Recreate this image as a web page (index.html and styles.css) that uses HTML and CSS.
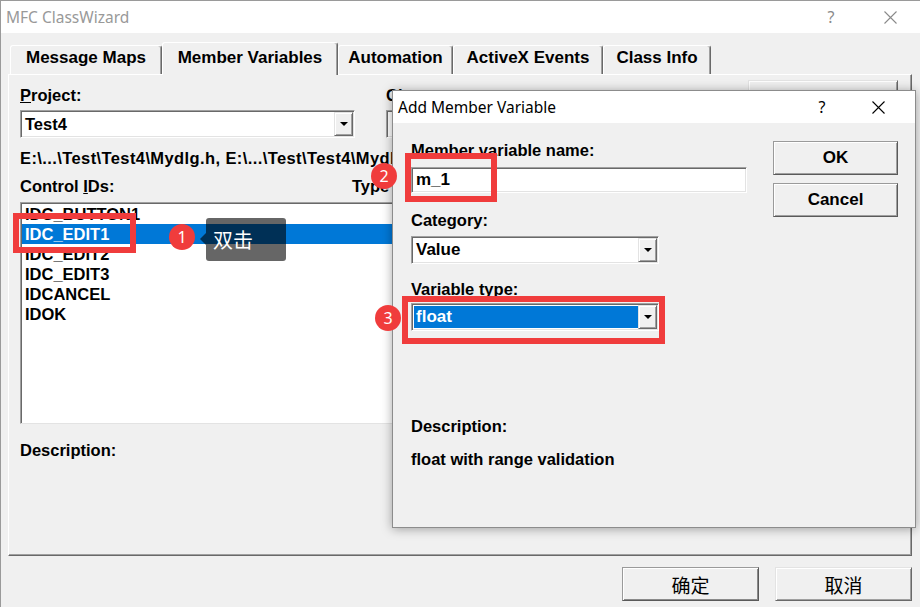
FILE: index.html
```html
<!DOCTYPE html>
<html>
<head>
<meta charset="utf-8">
<title>MFC ClassWizard</title>
<link rel="stylesheet" href="styles.css">
</head>
<body>
<div class="window">
  <div class="titlebar">
    <span class="title">MFC ClassWizard</span>
    <span class="cap cap-help">?</span>
    <span class="cap cap-close"><svg width="13" height="13" viewBox="0 0 13 13"><path d="M0.5 0.5L12.5 12.5M12.5 0.5L0.5 12.5" stroke="currentColor" stroke-width="1.1" fill="none"/></svg></span>
  </div>
  <div class="tabs">
    <div class="tab t1">Message Maps</div>
    <div class="tab t2 active">Member Variables</div>
    <div class="tab t3">Automation</div>
    <div class="tab t4">ActiveX Events</div>
    <div class="tab t5">Class Info</div>
  </div>
  <div class="panel">
    <div class="row-top">
      <div class="field">
        <div class="label"><u>P</u>roject:</div>
        <div class="combo"><span class="combo-text">Test4</span><span class="drop"><i class="tri"></i></span></div>
      </div>
      <div class="field classname">
        <div class="label">C<u>l</u>ass name:</div>
        <div class="combo"><span class="combo-text"></span><span class="drop"><i class="tri"></i></span></div>
      </div>
      <div class="btn addclass"></div>
    </div>
    <div class="path">E:\...\Test\Test4\Mydlg.h, E:\...\Test\Test4\Mydlg.cpp</div>
    <div class="list-head"><span>Control <u>I</u>Ds:</span><span>Type</span></div>
    <div class="listbox">
      <div class="item">IDC_BUTTON1</div>
      <div class="item sel">IDC_EDIT1</div>
      <div class="item">IDC_EDIT2</div>
      <div class="item">IDC_EDIT3</div>
      <div class="item">IDCANCEL</div>
      <div class="item">IDOK</div>
    </div>
    <div class="desc">Description:</div>
  </div>
  <div class="footer">
    <div class="btn cjk default">确定</div>
    <div class="btn cjk">取消</div>
  </div>
</div>

<div class="dialog">
  <div class="dlg-title">
    <span class="title">Add Member Variable</span>
    <span class="cap cap-help">?</span>
    <span class="cap cap-close"><svg width="13" height="13" viewBox="0 0 13 13"><path d="M0.5 0.5L12.5 12.5M12.5 0.5L0.5 12.5" stroke="currentColor" stroke-width="1.1" fill="none"/></svg></span>
  </div>
  <div class="dlg-body">
    <div class="dlg-left">
      <div class="label">Member variable name:</div>
      <div class="edit">m_1</div>
      <div class="label gap-cat">Category:</div>
      <div class="combo narrow cat"><span class="combo-text">Value</span><span class="drop"><i class="tri"></i></span></div>
      <div class="label gap-type">Variable type:</div>
      <div class="combo narrow vtype"><span class="combo-text sel">float</span><span class="drop"><i class="tri"></i></span></div>
      <div class="label gap-desc">Description:</div>
      <div class="label gap-desctext">float with range validation</div>
    </div>
    <div class="dlg-right">
      <div class="btn dbtn ok">OK</div>
      <div class="btn dbtn cancel">Cancel</div>
    </div>
  </div>
</div>

<div class="mark r1"></div>
<div class="mark r2"></div>
<div class="mark r3"></div>
<div class="badge b1">1</div>
<div class="badge b2">2</div>
<div class="badge b3">3</div>
<div class="tip">双击</div>
</body>
</html>
```

FILE: styles.css
```css
* { box-sizing: border-box; }
html, body { margin: 0; padding: 0; }
body {
  width: 920px;
  height: 607px;
  overflow: hidden;
  position: relative;
  background: #f0f0f0;
  font-family: "Liberation Sans", Arial, sans-serif;
  font-weight: bold;
  font-size: 16.5px;
  color: #000;
}
.window {
  width: 920px;
  height: 607px;
  border-left: 1px solid #9a9a9a;
  border-top: 1px solid #9a9a9a;
}
.titlebar {
  height: 32px;
  background: #fff;
  display: flex;
  align-items: center;
  padding-left: 5px;
  font-family: "Noto Sans", "Open Sans", sans-serif;
  font-weight: normal;
  font-size: 15.5px;
  color: #999;
}
.title { flex: 1; white-space: nowrap; }
.cap {
  width: 46px;
  height: 32px;
  display: flex;
  align-items: center;
  justify-content: center;
  font-size: 16px;
}
.titlebar .cap { color: #8a8a8a; }
.titlebar .cap-help { margin-right: 13px; }
.titlebar .cap-close { margin-right: 7px; }

.tabs {
  height: 41px;
  display: flex;
  align-items: flex-end;
  padding-left: 9px;
  font-size: 17px;
}
.tab {
  height: 29px;
  padding-top: 1px;
  line-height: 22px;
  text-align: center;
  white-space: nowrap;
  background: #f0f0f0;
  border-top: 1px solid #fff;
  border-left: 1px solid #fff;
  border-right: 1px solid #696969;
  box-shadow: inset -1px 0 #a0a0a0;
  border-radius: 3px 3px 0 0;
}
.tab.active {
  height: 33px;
  padding-top: 4px;
  margin-bottom: -1px;
  position: relative;
  z-index: 1;
}
.t1 { width: 152px; }
.t2 { width: 176px; }
.t3 { width: 115px; }
.t4 { width: 150px; }
.t5 { width: 108px; }

.panel {
  margin-left: 7px;
  width: 904px;
  height: 482px;
  border: 1px solid;
  border-color: #fff #696969 #696969 #fff;
  box-shadow: inset -1px -1px #a0a0a0;
  padding: 10px 11px 0 11px;
}
.row-top {
  display: flex;
  align-items: flex-start;
  height: 53px;
}
.field { width: 335px; }
.field.classname { margin-left: 31px; }
.label {
  line-height: 20px;
  height: 20px;
  white-space: nowrap;
}
.combo {
  display: flex;
  height: 28px;
  margin-top: 5px;
  background: #fff;
  border: 1px solid;
  border-color: #a0a0a0 #fff #fff #a0a0a0;
  box-shadow: inset 1px 1px #696969, inset -1px -1px #e3e3e3;
  padding: 1px;
}
.combo-text {
  flex: 1;
  padding-left: 3px;
  line-height: 24px;
  white-space: nowrap;
  overflow: hidden;
}
.combo-text.sel {
  background: #0078d7;
  color: #fff;
  margin: 1px 0 1px 1px;
  line-height: 22px;
  padding-left: 2px;
}
.drop {
  width: 19px;
  height: 24px;
  background: #f0f0f0;
  border: 1px solid;
  border-color: #e3e3e3 #696969 #696969 #e3e3e3;
  box-shadow: inset 1px 1px #fff, inset -1px -1px #a0a0a0;
  display: flex;
  align-items: center;
  justify-content: center;
}
.tri {
  width: 0;
  height: 0;
  border-left: 4px solid transparent;
  border-right: 4px solid transparent;
  border-top: 4px solid #000;
}
.addclass {
  margin-left: 27px;
  margin-top: -5px;
  width: 150px;
  height: 36px;
}
.path {
  margin-top: 10px;
  line-height: 20px;
  white-space: nowrap;
  letter-spacing: 0.4px;
}
.list-head {
  margin-top: 8px;
  display: grid;
  grid-template-columns: 332px 1fr;
  line-height: 20px;
}
.listbox {
  margin-top: 6px;
  height: 222px;
  width: 880px;
  background: #fff;
  border: 1px solid;
  border-color: #a0a0a0 #fff #e3e3e3 #a0a0a0;
  box-shadow: inset 1px 1px #696969;
  padding: 1px 0 0 1px;
}
.item {
  height: 20px;
  line-height: 20px;
  padding-left: 3px;
  white-space: nowrap;
}
.item.sel { background: #0078d7; color: #fff; }
.desc {
  margin-top: 16px;
  line-height: 20px;
}

.footer {
  display: flex;
  justify-content: flex-end;
  gap: 16px;
  padding-right: 8px;
  margin-top: 11px;
}
.btn {
  background: #f0f0f0;
  border: 1px solid;
  border-color: #e3e3e3 #696969 #696969 #e3e3e3;
  box-shadow: inset 1px 1px #fff, inset -1px -1px #a0a0a0;
  display: flex;
  align-items: center;
  justify-content: center;
  white-space: nowrap;
}
.btn.cjk {
  width: 137px;
  height: 34px;
  font-family: "Noto Sans CJK SC", "Noto Sans", sans-serif;
  font-weight: normal;
  font-size: 19px;
}
.btn.default {
  border-color: #9a9a9a #5a5a5a #5a5a5a #9a9a9a;
  box-shadow: inset 1px 1px #fff, inset -1px -1px #8a8a8a;
}

.dialog {
  position: absolute;
  left: 392px;
  top: 90px;
  width: 524px;
  height: 438px;
  background: #f0f0f0;
  border: 1px solid #8c8c8c;
  box-shadow: 0 1px 10px rgba(0, 0, 0, 0.35);
  z-index: 5;
}
.dlg-title {
  height: 32px;
  background: #fff;
  display: flex;
  align-items: center;
  padding-left: 5px;
  font-family: "Noto Sans", "Open Sans", sans-serif;
  font-weight: normal;
  font-size: 15.5px;
  color: #000;
}
.dlg-title .cap-help { margin-right: 10px; }
.dlg-title .cap-close { margin-right: 14px; }
.dlg-body {
  display: grid;
  grid-template-columns: 336px 125px;
  column-gap: 26px;
  padding: 17px 0 0 18px;
  font-size: 17px;
}
.dlg-left .label { font-size: 16.5px; }
.edit {
  margin-top: 7px;
  height: 26px;
  width: 336px;
  background: #fff;
  border: 1px solid;
  border-color: #a0a0a0 #fff #fff #a0a0a0;
  box-shadow: inset 1px 1px #696969, inset -1px -1px #e3e3e3;
  padding-left: 4px;
  line-height: 24px;
}
.combo.narrow { width: 248px; }
.gap-cat { margin-top: 17px; }
.combo.cat { margin-top: 6px; }
.gap-type { margin-top: 15px; }
.combo.vtype { margin-top: 4px; }
.gap-desc { margin-top: 85px; }
.gap-desctext { margin-top: 13px; }
.dbtn {
  width: 125px;
  height: 34px;
  border-color: #9a9a9a #5a5a5a #5a5a5a #9a9a9a;
  box-shadow: inset 1px 1px #fff, inset -1px -1px #a0a0a0;
}
.ok { margin-top: 1px; }
.cancel { margin-top: 8px; }

.mark {
  position: absolute;
  border: 6px solid #f03c3c;
  z-index: 10;
}
.r1 { left: 13px; top: 213px; width: 123px; height: 40px; }
.r2 { left: 405px; top: 153px; width: 92px; height: 49px; }
.r3 { left: 402px; top: 296px; width: 263px; height: 48px; }
.badge {
  position: absolute;
  width: 26px;
  height: 26px;
  border-radius: 50%;
  background: #f03c3c;
  color: #fff;
  font-family: "Noto Sans", "Liberation Sans", sans-serif;
  font-weight: normal;
  font-size: 16px;
  line-height: 26px;
  text-align: center;
  z-index: 11;
}
.b1 { left: 169px; top: 224px; }
.b2 { left: 371px; top: 163px; }
.b3 { left: 375px; top: 305px; }
.tip {
  position: absolute;
  left: 206px;
  top: 218px;
  width: 80px;
  height: 43px;
  border-radius: 3px;
  background: rgba(0, 0, 0, 0.6);
  color: #fff;
  font-family: "Noto Sans CJK SC", sans-serif;
  font-weight: normal;
  font-size: 20px;
  line-height: 43px;
  padding-left: 7px;
  z-index: 11;
}
.tip::before {
  content: "";
  position: absolute;
  left: -6px;
  top: 15px;
  border-top: 6px solid transparent;
  border-bottom: 6px solid transparent;
  border-right: 6px solid rgba(0, 0, 0, 0.6);
}
```
